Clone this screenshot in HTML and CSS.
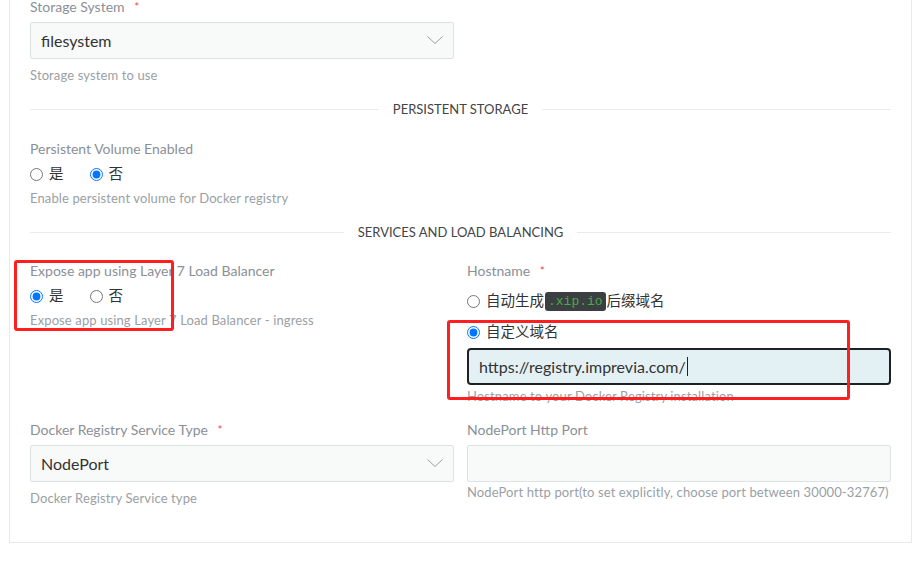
FILE: index.html
```html
<!DOCTYPE html>
<html lang="en">
<head>
<meta charset="utf-8">
<title>Docker Registry</title>
<link rel="stylesheet" href="styles.css">
</head>
<body>
<div class="card">
  <div class="group">
    <label class="label">Storage System <span class="req">*</span></label>
    <div class="select"><span class="select-value">filesystem</span>
      <svg class="chev" width="16" height="9" viewBox="0 0 16 9"><path d="M0.5 0.5 L8 7.5 L15.5 0.5" fill="none" stroke="#9aa0a6" stroke-width="1"/></svg>
    </div>
    <div class="help help-select">Storage system to use</div>
  </div>

  <div class="divider"><span>PERSISTENT STORAGE</span></div>

  <div class="group">
    <label class="label">Persistent Volume Enabled</label>
    <div class="radios">
      <label class="radio"><input type="radio" name="pv"><span>是</span></label>
      <label class="radio"><input type="radio" name="pv" checked><span>否</span></label>
    </div>
    <div class="help help-radio">Enable persistent volume for Docker registry</div>
  </div>

  <div class="divider divider-2"><span>SERVICES AND LOAD BALANCING</span></div>

  <div class="row">
    <div class="group">
      <label class="label">Expose app using Layer 7 Load Balancer</label>
      <div class="radios">
        <label class="radio"><input type="radio" name="ing" checked><span>是</span></label>
        <label class="radio"><input type="radio" name="ing"><span>否</span></label>
      </div>
      <div class="help help-radio">Expose app using Layer 7 Load Balancer - ingress</div>
    </div>
    <div class="group">
      <label class="label">Hostname <span class="req">*</span></label>
      <label class="radio radio-first"><input type="radio" name="host"><span>自动生成<code class="chip">.xip.io</code>后缀域名</span></label>
      <label class="radio radio-second"><input type="radio" name="host" checked><span>自定义域名</span></label>
      <div class="input input-focus"><span>https://registry.imprevia.com/</span><span class="caret"></span></div>
      <div class="help help-focus">Hostname to your Docker Registry installation</div>
    </div>
  </div>

  <div class="row row-last">
    <div class="group">
      <label class="label">Docker Registry Service Type <span class="req">*</span></label>
      <div class="select"><span class="select-value">NodePort</span>
        <svg class="chev" width="16" height="9" viewBox="0 0 16 9"><path d="M0.5 0.5 L8 7.5 L15.5 0.5" fill="none" stroke="#9aa0a6" stroke-width="1"/></svg>
      </div>
      <div class="help help-select">Docker Registry Service type</div>
    </div>
    <div class="group">
      <label class="label">NodePort Http Port</label>
      <div class="input"></div>
      <div class="help">NodePort http port(to set explicitly, choose port between 30000-32767)</div>
    </div>
  </div>

  <div class="mark mark-left"></div>
  <div class="mark mark-right"></div>
</div>
</body>
</html>
```

FILE: styles.css
```css
* { box-sizing: border-box; }
html, body { margin: 0; padding: 0; background: #fff; }
body {
  font-family: Lato, "Noto Sans CJK SC", sans-serif;
  color: #333;
  overflow: hidden;
}
.card {
  position: relative;
  margin: -24px 6px 0 9px;
  border: 1px solid #e8eaea;
  padding: 20px 20px 36px 20px;
  background: #fff;
}
.group { margin-bottom: 16px; }
.label {
  display: block;
  font-size: 14px;
  line-height: 20px;
  color: #8a9097;
  margin-bottom: 5px;
}
.req { color: #e6534b; font-size: 12px; margin-left: 6px; vertical-align: top; }
.select, .input {
  height: 37px;
  border: 1px solid #dde3e3;
  background: #f8fafa;
  border-radius: 2px;
  display: flex;
  align-items: center;
  padding: 0 10px;
  font-size: 16px;
  color: #333;
}
.select { justify-content: space-between; width: 424px; }
.help {
  font-size: 13px;
  letter-spacing: 0.12px;
  line-height: 16px;
  color: #9a9fa5;
  margin-top: 2px;
}
.help-select { margin-top: 8px; }
.help-radio { margin-top: 6px; }
.help-focus { margin-top: 3px; }
.divider {
  display: flex;
  align-items: center;
  gap: 14px;
  font-size: 13px;
  line-height: 20px;
  color: #444;
  margin-bottom: 20px;
}
.divider::before, .divider::after {
  content: "";
  flex: 1;
  height: 1px;
  background: #e8ecec;
}
.divider-2 { margin-bottom: 19px; }
.radios { display: flex; gap: 26px; height: 20px; align-items: center; }
.radio {
  display: flex;
  align-items: center;
  font-size: 14.5px;
  line-height: 20px;
  color: #333;
}
.radio input {
  margin: 0 6px 0 0;
  width: 13px;
  height: 13px;
}
.radio-first { margin-top: 9px; height: 22px; }
.radio-second { margin-top: 10px; margin-bottom: 6px; height: 20px; }
.chip {
  display: inline-block;
  background: #3c3f41;
  color: #4aa84a;
  font-family: "Liberation Mono", monospace;
  font-size: 13px;
  line-height: 19px;
  padding: 0 3px;
  margin: 0 1px;
  border-radius: 3px;
  vertical-align: middle;
}
.input-focus {
  border: 2px solid #1e2224;
  background: #e3f1f5;
  border-radius: 4px;
  padding: 0 10px;
}
.caret { width: 1px; height: 19px; background: #222; margin-left: 1px; }
.row {
  display: grid;
  grid-template-columns: 424px 424px;
  column-gap: 13px;
}
.row-last .group { margin-bottom: 0; }
.mark {
  position: absolute;
  border: 3px solid #ff1f1f;
  border-radius: 3px;
  pointer-events: none;
}
.mark-left { left: 4px; top: 283px; width: 160px; height: 71px; }
.mark-right { left: 437px; top: 343px; width: 403px; height: 80px; }
```
